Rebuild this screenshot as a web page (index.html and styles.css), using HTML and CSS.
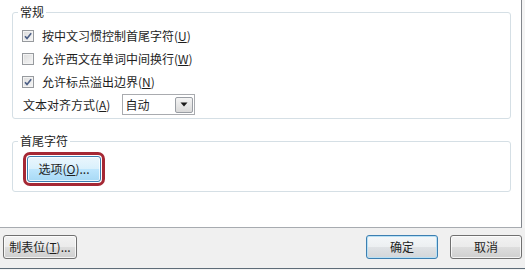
FILE: index.html
```html
<!DOCTYPE html>
<html lang="zh-CN">
<head>
<meta charset="utf-8">
<title>中文版式</title>
<link rel="stylesheet" href="styles.css">
</head>
<body>
<div class="dialog">
  <div class="panel">
    <fieldset class="group group-general">
      <legend class="group-title">常规</legend>
      <div class="rows">
        <label class="row">
          <span class="check checked"><svg viewBox="0 0 12 12" width="12" height="12"><path d="M3 6.2 L5 8.4 L9.2 3.2" fill="none" stroke="#4c5f86" stroke-width="1.6"/></svg></span>
          <span class="row-text">按中文习惯控制首尾字符(<u>U</u>)</span>
        </label>
        <label class="row">
          <span class="check"></span>
          <span class="row-text">允许西文在单词中间换行(<u>W</u>)</span>
        </label>
        <label class="row">
          <span class="check checked"><svg viewBox="0 0 12 12" width="12" height="12"><path d="M3 6.2 L5 8.4 L9.2 3.2" fill="none" stroke="#4c5f86" stroke-width="1.6"/></svg></span>
          <span class="row-text">允许标点溢出边界(<u>N</u>)</span>
        </label>
        <div class="row row-align">
          <span class="align-label">文本对齐方式(<u>A</u>)</span>
          <div class="combo">
            <span class="combo-value">自动</span>
            <span class="combo-button"><svg viewBox="0 0 8 5" width="8" height="5"><path d="M0.5 0.5 H7.5 L4 4.5 Z" fill="#1a1a1a"/></svg></span>
          </div>
        </div>
      </div>
    </fieldset>
    <fieldset class="group group-ends">
      <legend class="group-title">首尾字符</legend>
      <div class="rows">
        <button class="btn btn-hover btn-options">选项(<u>O</u>)...</button>
      </div>
    </fieldset>
  </div>
  <div class="footer">
    <button class="btn btn-tabs">制表位(<u>T</u>)...</button>
    <div class="footer-right">
      <button class="btn btn-default">确定</button>
      <button class="btn">取消</button>
    </div>
  </div>
</div>
</body>
</html>
```
FILE: styles.css
```css
html, body {
  margin: 0;
  padding: 0;
  background: #f4f4f4;
}
body {
  font-family: "Noto Sans CJK SC", "Noto Sans", sans-serif;
  font-size: 12px;
  color: #1e1e1e;
}
.dialog {
  width: 525px;
  height: 270px;
  display: flex;
  flex-direction: column;
  overflow: hidden;
}
.panel {
  width: 522px;
  height: 228px;
  box-sizing: border-box;
  background: #ffffff;
  border-right: 1px solid #82868c;
  border-bottom: 1px solid #a7abb0;
  padding-top: 4px;
  display: flex;
  flex-direction: column;
}
.group {
  margin: 0 0 0 12px;
  width: 499px;
  box-sizing: border-box;
  border: 1px solid #d5dfe5;
  border-radius: 3px;
  padding: 4px 10px 2px 5px;
  min-width: 0;
}
.group-ends {
  margin-top: 14px;
  padding-top: 7px;
  padding-bottom: 9px;
}
.group-title {
  padding: 0 2px;
  line-height: 16px;
  color: #1e1e1e;
}
.rows {
  padding-left: 4px;
  display: flex;
  flex-direction: column;
}
.row {
  height: 23px;
  display: flex;
  align-items: center;
}
.check {
  width: 12px;
  height: 12px;
  box-sizing: border-box;
  border: 1px solid #979a9e;
  background: linear-gradient(135deg, #dcdcdc, #f6f6f6);
  box-shadow: inset 0 0 0 1px #f3f3f3;
  display: flex;
  align-items: center;
  justify-content: center;
}
.check svg {
  display: block;
  margin: -1px;
}
.row-text {
  margin-left: 8px;
  line-height: 16px;
}
.align-label {
  margin-left: 1px;
  line-height: 16px;
}
.combo {
  margin-left: 12px;
  width: 73px;
  height: 21px;
  box-sizing: border-box;
  border: 1px solid #a9abaf;
  background: #ffffff;
  display: flex;
  align-items: center;
  justify-content: space-between;
  padding: 0 1px 0 2px;
}
.combo-value {
  line-height: 16px;
}
.combo-button {
  width: 18px;
  height: 16px;
  box-sizing: border-box;
  border: 1px solid #9a9ea4;
  border-radius: 2px;
  background: linear-gradient(#f4f4f4, #dadada);
  display: flex;
  align-items: center;
  justify-content: center;
}
.combo-button svg {
  display: block;
}
.btn {
  height: 24px;
  box-sizing: border-box;
  border: 1px solid #707070;
  border-radius: 3px;
  background: linear-gradient(#f2f2f2 0%, #ebebeb 50%, #dddddd 51%, #cfcfcf 100%);
  box-shadow: inset 0 0 0 1px rgba(255, 255, 255, 0.75);
  font-family: inherit;
  font-size: 12px;
  color: #1e1e1e;
  padding: 0;
  line-height: 20px;
}
.btn u {
  text-decoration-thickness: 1px;
}
.btn-hover {
  border-color: #3c7fb1;
  background: linear-gradient(#eaf6fd 0%, #d9f0fc 50%, #bee6fd 51%, #a7d9f5 100%);
}
.btn-options {
  width: 74px;
  height: 26px;
  outline: 3px solid #a52834;
  outline-offset: 1px;
  margin-left: 5px;
  align-self: flex-start;
}
.btn-default {
  border-color: #3c7fb1;
  box-shadow: inset 0 0 0 1px #b8e0f5;
  background: linear-gradient(#f4f7f9 0%, #eceff1 50%, #dfe2e5 51%, #d3d6d9 100%);
}
.footer {
  height: 41px;
  box-sizing: border-box;
  background: #f0f0f0;
  border-bottom: 1px solid #5e6c78;
  display: flex;
  justify-content: space-between;
  align-items: flex-start;
  padding: 7px 3px 0 3px;
}
.btn-tabs {
  width: 74px;
}
.footer-right {
  display: flex;
  gap: 12px;
}
.footer-right .btn {
  width: 72px;
}
```
